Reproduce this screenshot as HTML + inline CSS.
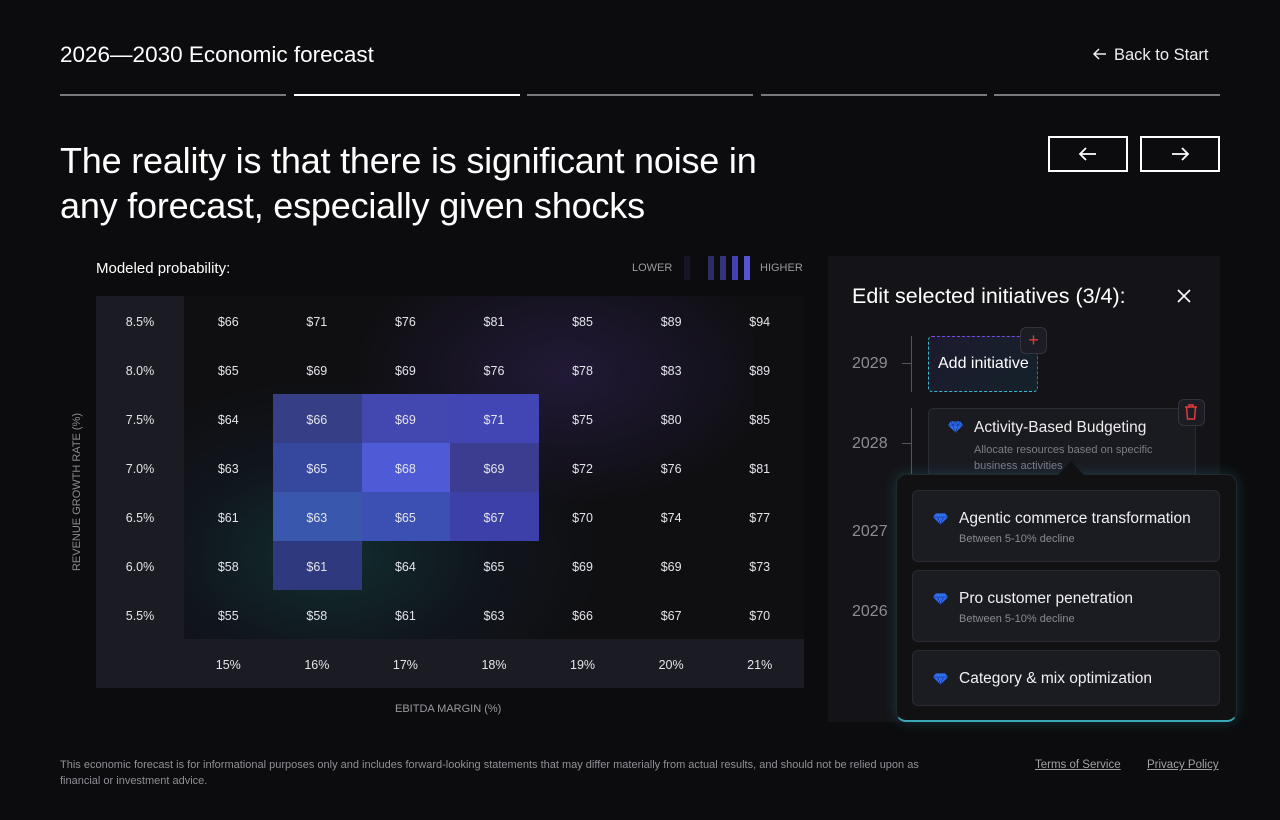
<!DOCTYPE html>
<html><head><meta charset="utf-8"><style>
*{margin:0;padding:0;box-sizing:border-box}
body{width:1280px;height:820px;background:#0c0c0e;color:#fff;font-family:"Liberation Sans",sans-serif;position:relative;overflow:hidden}
.a{position:absolute}
.bar{position:absolute;top:94px;height:2px;width:226px;background:#7a7a7e}
.cell{position:absolute;width:88.6px;height:49px;display:flex;align-items:center;justify-content:center;font-size:12.5px;color:#e4e4ea}
.card{position:absolute;left:912px;width:308px;background:#1b1b22;border:1px solid #2a2a33;border-radius:6px}
.card .t{position:absolute;left:46px;font-size:15.5px;color:#f0f0f4}
.card .s{position:absolute;left:46px;font-size:11px;color:#8a8a94}
.gem{position:absolute;left:20px;width:15px;height:12px}
.yr{position:absolute;left:852px;font-size:16px;color:#8c8c94}
</style></head><body>
<div class="a" style="left:60px;top:42px;font-size:22.5px">2026—2030 Economic forecast</div>
<div class="a" style="left:1092px;top:46px;font-size:16.5px;color:#eee">
<svg width="16" height="14" style="vertical-align:-1px;margin-right:6px" viewBox="0 0 16 14"><path d="M14 7H2M7 2L2 7l5 5" stroke="#eee" stroke-width="1.5" fill="none"/></svg>Back to Start</div>
<div class="bar" style="left:60px"></div>
<div class="bar" style="left:294px;background:#fff"></div>
<div class="bar" style="left:527px"></div>
<div class="bar" style="left:761px"></div>
<div class="bar" style="left:994px"></div>
<div class="a" style="left:60px;top:138px;font-size:36px;line-height:45px;letter-spacing:-0.2px">The reality is that there is significant noise in<br>any forecast, especially given shocks</div>
<div class="a" style="left:1048px;top:136px;width:80px;height:36px;border:2px solid #fff;display:flex;align-items:center;justify-content:center"><svg width="20" height="16" viewBox="0 0 20 16"><path d="M18 8H2M8 2L2 8l6 6" stroke="#fff" stroke-width="1.8" fill="none"/></svg></div>
<div class="a" style="left:1140px;top:136px;width:80px;height:36px;border:2px solid #fff;display:flex;align-items:center;justify-content:center"><svg width="20" height="16" viewBox="0 0 20 16"><path d="M2 8h16M12 2l6 6-6 6" stroke="#fff" stroke-width="1.8" fill="none"/></svg></div>

<div class="a" style="left:96px;top:260px;font-size:15px">Modeled probability:</div>
<div class="a" style="left:632px;top:262px;font-size:11px;color:#9a9aa0">LOWER</div>
<div class="a" style="left:684px;top:256px;width:6px;height:24px;background:#161628"></div>
<div class="a" style="left:708px;top:256px;width:6px;height:24px;background:#2c2c66"></div>
<div class="a" style="left:720px;top:256px;width:6px;height:24px;background:#34347a"></div>
<div class="a" style="left:732px;top:256px;width:6px;height:24px;background:#4242b0"></div>
<div class="a" style="left:744px;top:256px;width:6px;height:24px;background:#5555d4"></div>
<div class="a" style="left:760px;top:262px;font-size:11px;color:#9a9aa0">HIGHER</div>

<div class="a" style="left:96px;top:296px;width:708px;height:392px;background:#1b1b24"></div>
<div class="a" style="left:184px;top:296px;width:620px;height:343px;background:#0f0f12;overflow:hidden">
<div class="a" style="left:0px;top:80px;width:420px;height:300px;background:radial-gradient(ellipse at 35% 60%,rgba(20,70,70,.55),rgba(20,40,60,.25) 40%,transparent 70%)"></div>
<div class="a" style="left:150px;top:-40px;width:420px;height:260px;background:radial-gradient(ellipse at 55% 45%,rgba(60,40,110,.4),transparent 65%)"></div>
</div>
<div class="a" style="left:273px;top:394px;width:88.6px;height:49px;background:#363f86"></div>
<div class="a" style="left:361.6px;top:394px;width:88.6px;height:49px;background:#4347b0"></div>
<div class="a" style="left:450.2px;top:394px;width:88.6px;height:49px;background:#4246b5"></div>
<div class="a" style="left:273px;top:443px;width:88.6px;height:49px;background:#36489e"></div>
<div class="a" style="left:361.6px;top:443px;width:88.6px;height:49px;background:#4f5bd6"></div>
<div class="a" style="left:450.2px;top:443px;width:88.6px;height:49px;background:#3c3c90"></div>
<div class="a" style="left:273px;top:492px;width:88.6px;height:49px;background:#3957ad"></div>
<div class="a" style="left:361.6px;top:492px;width:88.6px;height:49px;background:#3c50b4"></div>
<div class="a" style="left:450.2px;top:492px;width:88.6px;height:49px;background:#3d40a8"></div>
<div class="a" style="left:273px;top:541px;width:88.6px;height:49px;background:#2f3a7e"></div>

<div id="grid"></div>
<script>
var rows=[["8.5%",66,71,76,81,85,89,94],["8.0%",65,69,69,76,78,83,89],["7.5%",64,66,69,71,75,80,85],["7.0%",63,65,68,69,72,76,81],["6.5%",61,63,65,67,70,74,77],["6.0%",58,61,64,65,69,69,73],["5.5%",55,58,61,63,66,67,70]];
var h="";
rows.forEach(function(r,i){r.forEach(function(v,j){var x=96+j*88.4;if(j>0)x=184+(j-1)*88.57;var w=j==0?88:88.57;h+='<div class="cell" style="left:'+x+'px;width:'+w+'px;top:'+(297+i*49)+'px">'+(j==0?v:'$'+v)+'</div>';});});
["15%","16%","17%","18%","19%","20%","21%"].forEach(function(v,j){h+='<div class="cell" style="left:'+(184+j*88.57)+'px;width:88.57px;top:640px">'+v+'</div>';});
document.getElementById("grid").innerHTML=h;
</script>
<div class="a" style="left:395px;top:703px;font-size:11px;color:#9a9aa0">EBITDA MARGIN (%)</div>
<div class="a" style="font-size:11px;color:#8a8a90;transform:translate(-50%,-50%) rotate(-90deg);white-space:nowrap;left:77px;top:492px">REVENUE GROWTH RATE (%)</div>

<div class="a" style="left:828px;top:256px;width:392px;height:466px;background:#141418"></div>
<div class="a" style="left:852px;top:284px;font-size:21.5px">Edit selected initiatives (3/4):</div>
<svg class="a" style="left:1176px;top:288px" width="16" height="16" viewBox="0 0 16 16"><path d="M2 2l12 12M14 2L2 14" stroke="#fff" stroke-width="1.6"/></svg>
<div class="a" style="left:911px;top:336px;width:1px;height:56px;background:#555"></div>
<div class="a" style="left:902px;top:363px;width:9px;height:1px;background:#555"></div>
<div class="a" style="left:911px;top:408px;width:1px;height:70px;background:#555"></div>
<div class="a" style="left:902px;top:443px;width:9px;height:1px;background:#555"></div>
<div class="yr" style="top:355px">2029</div>
<div class="yr" style="top:435px">2028</div>
<div class="yr" style="top:523px">2027</div>
<div class="yr" style="top:603px">2026</div>
<div class="a" style="left:928px;top:336px;width:110px;height:56px;border:1.5px dashed #3bb8d0;border-top-color:#7a4ae8;border-right-color:#6a4ae0;border-radius:4px;background:linear-gradient(135deg,#1d1a2e,#14222a)"></div>
<div class="a" style="left:938px;top:355px;font-size:16px">Add initiative</div>
<div class="a" style="left:1020px;top:327px;width:27px;height:27px;border-radius:6px;background:#1c1c24;border:1px solid #33333d;color:#e23b3b;font-size:18px;display:flex;align-items:center;justify-content:center">+</div>
<div class="a" style="left:928px;top:408px;width:268px;height:70px;background:#1a1a21;border:1px solid #2b2b34;border-radius:6px"></div>
<svg class="gem" style="left:948px;top:421px" viewBox="0 0 16 12"><path d="M3 0h10l3 4-8 8-8-8z" fill="#2f6df0"/><path d="M0 4h16M5 4l3 8 3-8M3 0l2 4 3-4 3 4 2-4" stroke="#173b9a" stroke-width=".8" fill="none"/></svg>
<div class="a" style="left:974px;top:419px;font-size:15.5px;color:#eee">Activity-Based Budgeting</div>
<div class="a" style="left:974px;top:442px;font-size:11px;color:#7d7d86;line-height:16px">Allocate resources based on specific<br>business activities</div>
<div class="a" style="left:1178px;top:399px;width:27px;height:27px;border-radius:6px;background:#1c1c24;border:1px solid #33333d"></div>
<svg class="a" style="left:1184px;top:404px" width="14" height="16" viewBox="0 0 14 16"><path d="M1 3h12M5 3V1h4v2M2.5 3l1 12h7l1-12" stroke="#e23b3b" stroke-width="1.5" fill="none"/></svg>

<div class="a" style="left:896px;top:474px;width:341px;height:248px;background:#111114;border-radius:10px;border:1px solid #1e2a2e;border-bottom:2px solid #3aa8b8;box-shadow:0 0 14px rgba(40,160,180,.25)"></div>
<div class="a" style="left:1058px;top:461px;width:0;height:0;border-left:13px solid transparent;border-right:13px solid transparent;border-bottom:14px solid #111114"></div>
<div class="card" style="top:490px;height:72px"><svg class="gem" style="top:22px" viewBox="0 0 16 12"><path d="M3 0h10l3 4-8 8-8-8z" fill="#2f6df0"/><path d="M0 4h16M5 4l3 8 3-8" stroke="#173b9a" stroke-width=".8" fill="none"/></svg><div class="t" style="top:19px">Agentic commerce transformation</div><div class="s" style="top:42px">Between 5-10% decline</div></div>
<div class="card" style="top:570px;height:72px"><svg class="gem" style="top:22px" viewBox="0 0 16 12"><path d="M3 0h10l3 4-8 8-8-8z" fill="#2f6df0"/><path d="M0 4h16M5 4l3 8 3-8" stroke="#173b9a" stroke-width=".8" fill="none"/></svg><div class="t" style="top:19px">Pro customer penetration</div><div class="s" style="top:42px">Between 5-10% decline</div></div>
<div class="card" style="top:650px;height:56px"><svg class="gem" style="top:22px" viewBox="0 0 16 12"><path d="M3 0h10l3 4-8 8-8-8z" fill="#2f6df0"/><path d="M0 4h16M5 4l3 8 3-8" stroke="#173b9a" stroke-width=".8" fill="none"/></svg><div class="t" style="top:19px">Category &amp; mix optimization</div></div>

<div class="a" style="left:60px;top:757px;width:895px;font-size:11px;line-height:16px;color:#8f8f96">This economic forecast is for informational purposes only and includes forward-looking statements that may differ materially from actual results, and should not be relied upon as financial or investment advice.</div>
<div class="a" style="left:1035px;top:759px;font-size:11.5px;color:#a0a0a6;text-decoration:underline">Terms of Service</div>
<div class="a" style="left:1147px;top:759px;font-size:11.5px;color:#a0a0a6;text-decoration:underline">Privacy Policy</div>
</body></html>
